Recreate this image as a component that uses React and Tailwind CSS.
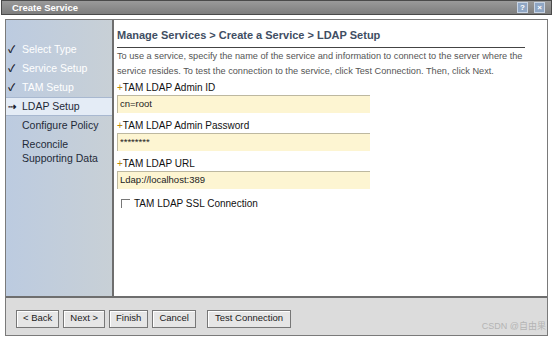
export default function App() {
  const steps = [
    { label: "Select Type", done: true },
    { label: "Service Setup", done: true },
    { label: "TAM Setup", done: true },
    { label: "LDAP Setup", current: true },
    { label: "Configure Policy" },
    { label: "Reconcile" },
  ];

  return (
    <div
      className="w-[553px] h-[339px] bg-white flex flex-col overflow-hidden"
      style={{ fontFamily: '"Liberation Sans", "Noto Sans CJK SC", sans-serif' }}
    >
      {/* title bar */}
      <div className="h-[15px] mx-[1px] bg-gradient-to-b from-[#9a9a9a] to-[#7e7e7e] border border-[#4a4a4a] flex items-center pl-[10px] pr-[6px]">
        <span className="text-[9.5px] font-bold text-white leading-none">Create Service</span>
        <div className="ml-auto flex gap-[6px]">
          <div className="w-[11px] h-[11px] bg-[#8fa6c4] border border-[#c8d4e4] text-white text-[8px] font-bold leading-[9px] text-center">?</div>
          <div className="w-[11px] h-[11px] bg-[#8fa6c4] border border-[#c8d4e4] text-white text-[8px] font-bold leading-[9px] text-center">×</div>
        </div>
      </div>

      <div className="flex-1 flex flex-col mx-[5px] mt-[4px] mb-[3px] border border-[#7a7a7a]">
        <div className="flex-1 flex min-h-0">
          {/* sidebar */}
          <div className="w-[108px] shrink-0 bg-gradient-to-r from-[#bccbe0] to-[#c8d0d6] border-r-2 border-[#6e6e6e] pt-[20px] text-[10.5px]">
            {steps.map((s) => (
              <div
                key={s.label}
                className={`h-[19px] flex items-center pl-[2px] ${
                  s.current ? "bg-[#e4ecf6] border-y border-[#a8b8d0]" : ""
                }`}
              >
                <span className="w-[14px] text-[10px] font-bold text-[#1a1a2a] leading-none">
                  {s.done ? "✓" : s.current ? "⇢" : ""}
                </span>
                <span className={s.done ? "text-white" : "text-[#1e2a38]"}>{s.label}</span>
              </div>
            ))}
            <div className="pl-[16px] -mt-[3px] text-[#1e2a38]">Supporting Data</div>
          </div>

          {/* main */}
          <div className="flex-1 pl-[3px] pr-[22px] pt-[7px]">
            <div className="text-[11px] font-bold text-[#3f4e63] pb-[3px] border-b border-[#444]">
              Manage Services &gt; Create a Service &gt; LDAP Setup
            </div>
            <p className="mt-[1px] text-[9.2px] leading-[15px] text-[#555]">
              To use a service, specify the name of the service and information to connect to the server where the
              service resides. To test the connection to the service, click Test Connection. Then, click Next.
            </p>

            {[
              ["TAM LDAP Admin ID", "cn=root"],
              ["TAM LDAP Admin Password", "********"],
              ["TAM LDAP URL", "Ldap://localhost:389"],
            ].map(([label, value], i) => (
              <div key={label} className={i === 0 ? "mt-[2px]" : "mt-[6px]"}>
                <div className="text-[10px] text-[#111] leading-[13px]">
                  <span className="text-[#b8860b]">+</span>
                  {label}
                </div>
                <div className="mt-[1px] w-[253px] h-[18px] bg-[#fdf5d2] border-t border-l border-[#bdb8a0] flex items-center pl-[2px] text-[9.5px] text-[#222]">
                  {value}
                </div>
              </div>
            ))}

            <div className="mt-[7px] ml-[4px] flex items-center gap-[4px] text-[10px] text-[#111]">
              <span className="w-[9px] h-[9px] border-t border-l border-[#777] bg-white"></span>
              TAM LDAP SSL Connection
            </div>
          </div>
        </div>

        {/* footer */}
        <div className="h-[39px] shrink-0 bg-[#dcdcdc] border-t-2 border-[#6e6e6e] flex items-center pl-[10px] pt-[4px] relative">
          <div className="flex gap-[4px] text-[9.5px] text-[#222]">
            {["< Back", "Next >", "Finish", "Cancel"].map((b) => (
              <button key={b} className="h-[18px] px-[6px] bg-[#e6e6e6] border border-[#777] shadow-[inset_1px_1px_0_#fff]">
                {b}
              </button>
            ))}
            <button className="ml-[7px] h-[18px] px-[7px] bg-[#e6e6e6] border border-[#777] shadow-[inset_1px_1px_0_#fff]">
              Test Connection
            </button>
          </div>
          <span className="absolute right-[1px] bottom-[2px] text-[9px] text-[#b4b4b4]">CSDN @自由果</span>
        </div>
      </div>
    </div>
  );
}
